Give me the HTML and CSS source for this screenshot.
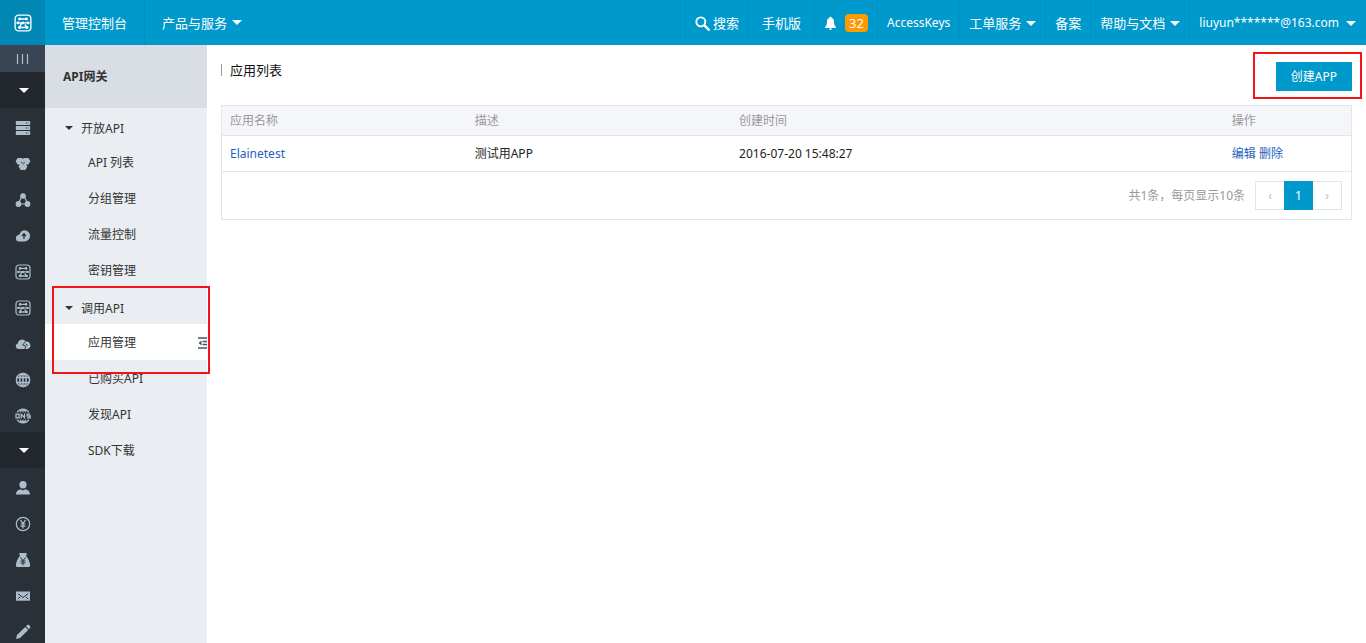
FILE: index.html
```html
<!DOCTYPE html>
<html lang="zh-CN">
<head>
<meta charset="utf-8">
<title>API网关 - 管理控制台</title>
<link rel="stylesheet" href="styles.css">
</head>
<body>
<svg class="defs" aria-hidden="true">
  <symbol id="cloud-box" viewBox="0 0 16 16">
    <rect x="1" y="1" width="14" height="14" rx="3" fill="none" stroke="currentColor" stroke-width="1.200"/>
    <path d="M4.600 4.400h6.800M2.800 7.900h10.400M6.800 8.300L4.800 12h6.200M10 9.800l1.800 2.400" fill="none" stroke="currentColor" stroke-width="1.300" stroke-linecap="round"/>
    <g fill="currentColor"><circle cx="5" cy="4.400" r="1.300"/><circle cx="11" cy="4.400" r="1.300"/><circle cx="3.500" cy="7.900" r="1.200"/><circle cx="12.500" cy="7.900" r="1.200"/><circle cx="8" cy="7.900" r="1.200"/><circle cx="5" cy="12" r="1.300"/><circle cx="11.600" cy="12" r="1.300"/></g>
  </symbol>
</svg>
<header class="topbar">
  <a class="logo" href="#" aria-label="首页"><svg class="logo-icon"><use href="#cloud-box"/></svg></a>
  <nav class="topnav">
    <a class="nav-main nav-home" href="#">管理控制台</a>
    <button class="nav-main" type="button">产品与服务<span class="caret"></span></button>
  </nav>
  <nav class="tools">
    <a class="tool" href="#"><svg class="search-icon" viewBox="0 0 16 16"><circle cx="6.200" cy="6.200" r="4.800" fill="none" stroke="currentColor" stroke-width="2"/><path d="M10 10l4.600 4.600" stroke="currentColor" stroke-width="2.600" stroke-linecap="round"/></svg>搜索</a>
    <a class="tool tool-wide" href="#">手机版</a>
    <a class="tool tool-bell" href="#" aria-label="消息"><svg class="bell-icon" viewBox="0 0 14 16"><path d="M7 .8c.9 0 1.300.6 1.300 1.300 1.700.6 2.500 2 2.500 3.800 0 3.400.6 4.700 2.200 6.100v.8H1V12c1.600-1.400 2.200-2.700 2.200-6.100 0-1.800.8-3.200 2.500-3.800C5.700 1.400 6.100.8 7 .8zM5.400 13.500h3.200c0 1-.7 1.600-1.600 1.600s-1.600-.6-1.600-1.600z" fill="currentColor"/></svg><span class="badge">32</span></a>
    <a class="tool tool-latin" href="#">AccessKeys</a>
    <button class="tool" type="button">工单服务<span class="caret"></span></button>
    <a class="tool" href="#">备案</a>
    <button class="tool" type="button">帮助与文档<span class="caret"></span></button>
    <button class="tool tool-latin" type="button">liuyun*******@163.com<span class="caret"></span></button>
  </nav>
</header>
<div class="shell">
  <nav class="rail" aria-label="产品">
    <button class="rail-toggle" type="button" aria-label="收起"><svg viewBox="0 0 16 16"><path d="M2.500 3v10M7.500 3v10M12.500 3v10" stroke="currentColor" stroke-width="1.200"/></svg></button>
    <button class="rail-fold" type="button" aria-label="产品与服务"><span class="caret"></span></button>
    <a class="rail-item" href="#" aria-label="服务器"><svg viewBox="0 0 16 16"><path d="M1.500 1h13a.7.7 0 0 1 .7.7v2.600a.7.7 0 0 1-.7.7h-13a.7.7 0 0 1-.7-.7V1.700a.7.7 0 0 1 .7-.7zM1.500 6h13a.7.7 0 0 1 .7.7v2.600a.7.7 0 0 1-.7.7h-13a.7.7 0 0 1-.7-.7V6.700a.7.7 0 0 1 .7-.7zM1.500 11h13a.7.7 0 0 1 .7.7v2.600a.7.7 0 0 1-.7.700h-13a.7.7 0 0 1-.7-.7v-2.600a.7.7 0 0 1 .7-.7z" fill="currentColor"/><path d="M11 3h2.500M11 8h2.500M11 13h2.500" stroke="#293038" stroke-width="1.200" stroke-dasharray="1.200 .8"/></svg></a>
    <a class="rail-item" href="#" aria-label="数据库"><svg viewBox="0 0 16 16"><g fill="currentColor"><path d="M2.600 2h4l1.400.8L9.400 2h4l2 3.200-2 3.400H2.600l-2-3.400z"/><path d="M5.600 7h4.800l2 3.400-2 3.600H5.600l-2-3.600z"/></g><path d="M6.200 6.600h1.200M8.600 6.600h1.200M8 7.400v1.200" stroke="#293038" stroke-width=".9"/></svg></a>
    <a class="rail-item" href="#" aria-label="负载均衡"><svg viewBox="0 0 16 16"><g fill="currentColor"><circle cx="8" cy="4" r="2.800"/><circle cx="3.500" cy="12" r="2.900"/><circle cx="12.500" cy="12" r="2.900"/></g><path d="M6.500 5L3.500 11M9.500 5l3 6M4 12h8" stroke="currentColor" stroke-width="1.200"/></svg></a>
    <a class="rail-item" href="#" aria-label="对象存储"><svg viewBox="0 0 16 16"><path d="M3.600 13.500A3.300 3.300 0 0 1 2.800 7.200 C4 6.600 4.800 6.700 5.200 5 6 3.200 7.600 2.300 9.500 2.300a5.600 5.600 0 0 1 0 11.200z" fill="currentColor"/><path d="M9 6v5M7 8l2-2.200L11 8" fill="none" stroke="#293038" stroke-width="1.300"/></svg></a>
    <a class="rail-item" href="#" aria-label="云产品一"><svg><use href="#cloud-box"/></svg></a>
    <a class="rail-item" href="#" aria-label="云产品二"><svg><use href="#cloud-box"/></svg></a>
    <a class="rail-item" href="#" aria-label="云监控"><svg viewBox="0 0 16 16"><path d="M3.500 13A2.800 2.800 0 0 1 2.800 7.500 4.200 4.200 0 0 1 10.600 5.600 3.800 3.800 0 0 1 12.400 13z" fill="currentColor"/><path d="M10.400 5.800L7.600 9l3.400 1.200-1.200 2.800M11 8.200l1.800 1.200" fill="none" stroke="#293038" stroke-width=".9"/></svg></a>
    <a class="rail-item" href="#" aria-label="网络"><svg viewBox="0 0 16 16"><g fill="none" stroke="currentColor" stroke-width="1.500"><circle cx="8" cy="8" r="6.600"/><ellipse cx="8" cy="8" rx="3.200" ry="6.600"/><path d="M8 1v14M1.500 5.500h13M1.500 10.500h13"/></g></svg></a>
    <a class="rail-item" href="#" aria-label="域名"><svg viewBox="0 0 16 16"><g fill="none" stroke="currentColor" stroke-width="1.300"><path d="M2.200 4.400a6.800 6.800 0 0 1 11.600 0M2.200 11.600a6.800 6.800 0 0 0 11.600 0M8 1v3.200M8 11.800V15M5.200 4.200C5.800 2.600 6.800 1.600 8 1.300c1.200.3 2.200 1.300 2.800 2.900M5.200 11.800c.6 1.600 1.600 2.600 2.800 2.900 1.200-.3 2.200-1.300 2.800-2.900"/><path d="M1 6.200h3v3.600H1zM6.200 10.400V6.400l3.300 3.200V5.600M15.200 6.200h-3V8h3v1.800h-3.200"/></g></svg></a>
    <button class="rail-fold" type="button" aria-label="用户中心"><span class="caret"></span></button>
    <a class="rail-item" href="#" aria-label="账号"><svg viewBox="0 0 16 16"><path d="M8 1c2.300 0 3.600 1.400 3.600 3.600C11.600 7 10.500 8.600 8 8.600S4.400 7 4.400 4.600C4.400 2.400 5.700 1 8 1zM1 14.500c0-3 1.500-4.500 4.700-5.300L8 10.400l2.300-1.200c3.200.8 4.700 2.300 4.700 5.300z" fill="currentColor"/></svg></a>
    <a class="rail-item" href="#" aria-label="费用"><svg viewBox="0 0 16 16"><g fill="none" stroke="currentColor" stroke-width="1.200"><circle cx="8" cy="8" r="6.700"/><path d="M5.400 3.800L8 7.600l2.600-3.800M8 7.600v5M5.500 8h5M5.500 10.200h5"/></g></svg></a>
    <a class="rail-item" href="#" aria-label="续费"><svg viewBox="0 0 16 16"><path d="M4.200 1h7.600l-.6 3.200c2.400 2.400 3.600 5.600 4 9.400 0 .8-.5 1.400-1.400 1.400H2.200C1.300 15 .8 14.400.8 13.600c.4-3.800 1.600-7 4-9.400z" fill="currentColor"/><path d="M5.500 5.500L8 8.700l2.500-3.200M8 8.700v4.500M5.500 9h5M5.500 11h5" fill="none" stroke="#293038" stroke-width="1"/></svg></a>
    <a class="rail-item" href="#" aria-label="消息中心"><svg viewBox="0 0 16 16"><path d="M1 3.500h14v9.200H1z" fill="currentColor"/><path d="M2.800 5.500L8 9.600l5.200-4.100M2.800 11l2.200-2M13.200 11L11 9" fill="none" stroke="#293038" stroke-width="1"/></svg></a>
    <a class="rail-item" href="#" aria-label="备案"><svg viewBox="0 0 16 16"><path d="M1 15l1-4L10.200 3l3 3L5 14zM11 2.200l1.200-1.100c.6-.5 1.200-.5 1.800 0l1 1c.5.600.5 1.200 0 1.800L14 5.200z" fill="currentColor"/></svg></a>
  </nav>
  <aside class="side">
    <h1 class="side-title">API网关</h1>
    <section class="group">
      <button class="group-head" type="button"><span class="caret"></span>开放API</button>
      <a class="side-link" href="#">API 列表</a>
      <a class="side-link" href="#">分组管理</a>
      <a class="side-link" href="#">流量控制</a>
      <a class="side-link" href="#">密钥管理</a>
    </section>
    <section class="group">
      <button class="group-head" type="button"><span class="caret"></span>调用API</button>
      <a class="side-link is-active" href="#">应用管理<svg class="collapse-icon" viewBox="0 0 9 12"><path d="M0 1h9M4.500 4.500H9M4.500 7.500H9M0 11h9" stroke="#465464" stroke-width="1.600"/><path d="M3.500 3.500v5L.5 6z" fill="#465464"/></svg></a>
      <a class="side-link" href="#">已购买API</a>
      <a class="side-link" href="#">发现API</a>
      <a class="side-link" href="#">SDK下载</a>
      <span class="mark mark-side"></span>
    </section>
  </aside>
  <main class="content">
    <div class="page-head">
      <h2 class="page-title">应用列表</h2>
      <div class="create"><button class="create-btn" type="button">创建APP</button><span class="mark mark-create"></span></div>
    </div>
    <table class="apps">
      <colgroup><col class="col-name"><col class="col-desc"><col class="col-time"><col></colgroup>
      <thead><tr><th>应用名称</th><th>描述</th><th>创建时间</th><th>操作</th></tr></thead>
      <tbody><tr><td><a href="#">Elainetest</a></td><td>测试用APP</td><td>2016-07-20 15:48:27</td><td><a href="#">编辑</a> <a href="#">删除</a></td></tr></tbody>
    </table>
    <div class="pager">
      <span class="total">共1条，每页显示10条</span>
      <div class="pages"><button type="button" aria-label="上一页">‹</button><button class="current" type="button">1</button><button type="button" aria-label="下一页">›</button></div>
    </div>
  </main>
</div>
</body>
</html>
```
FILE: styles.css
```css
* { box-sizing: border-box; }
body {
  margin: 0;
  height: 100vh;
  overflow: hidden;
  display: flex;
  flex-direction: column;
  background: #fff;
  color: #222;
  font: 12px/18px "Noto Sans", "Noto Sans CJK SC", sans-serif;
}
a { color: #1f5fc0; text-decoration: none; }
button { margin: 0; padding: 0; border: 0; background: none; color: inherit; font: inherit; cursor: pointer; }
.defs { display: none; }
.caret { border: 5px solid transparent; border-top-color: currentColor; border-bottom: 0; }

.topbar { flex: none; display: flex; height: 45px; background: #09c; color: #fff; font-size: 13px; }
.logo { display: flex; align-items: center; justify-content: center; width: 45px; background: #0087b4; color: #fff; }
.logo-icon { width: 18px; height: 18px; }
.topnav, .tools { display: flex; }
.tools { margin-left: auto; }
.nav-main, .tool { display: flex; align-items: center; gap: 5px; color: #fff; white-space: nowrap; }
.nav-main { padding: 0 17px; }
.nav-home { border-right: 1px solid #008fbf; }
.tool { padding: 1px 9px 0; border-left: 1px solid #0092c4; }
.tool-latin { font-size: 12px; }
.tool:last-child { gap: 7px; padding-right: 10px; }
.tool-wide { padding: 1px 13px 0; }
.search-icon { width: 15px; height: 15px; margin-right: -2px; }
.tool-bell { gap: 8px; }
.bell-icon { width: 13px; height: 15px; }
.badge { padding: 0 4px; border-radius: 4px; background: #f90; }

.shell { flex: 1; display: flex; min-height: 0; }
.rail { flex: none; display: flex; flex-direction: column; width: 45px; overflow: hidden; background: #293038; color: #aebdca; }
.rail svg { width: 16px; height: 16px; }
.rail-toggle, .rail-fold, .rail-item { flex: none; display: flex; align-items: center; justify-content: center; height: 36px; padding-left: 1px; color: inherit; }
.rail-item { padding-top: 4px; }
.rail-toggle { height: 27px; background: #394555; }
.rail-fold { padding-left: 2px; background: #22282e; color: #fff; }

.side { flex: none; width: 162px; background: #eaedf1; color: #333; }
.side-title { margin: 0; padding: 23px 18px 22px; background: #d9dee4; font-size: 12px; line-height: 18px; font-weight: 700; }
.group { position: relative; }
.group-head { display: flex; align-items: center; gap: 8px; width: 100%; height: 36px; padding: 6px 20px 0; }
.group-head .caret { border-width: 4px 4px 0; margin-bottom: 3px; }
.side-link { display: flex; align-items: center; justify-content: space-between; height: 36px; padding: 2px 0 0 43px; color: #333; }
.side-link.is-active { background: #fff; }
.collapse-icon { width: 9px; height: 12px; }

.mark { position: absolute; border: 2px solid #f01414; pointer-events: none; }
.mark-side { top: -2px; left: 7px; right: -3px; height: 88px; }
.mark-create { inset: -10px -10px -8px -23px; }

.content { flex: 1; min-width: 0; padding: 17px 14px; }
.page-head { display: flex; justify-content: space-between; align-items: flex-start; margin-bottom: 14px; }
.page-title { margin: 2px 0 0; padding-left: 8px; border-left: 1px solid #8899aa; font-size: 13px; line-height: 12px; font-weight: 400; color: #111; }
.create { position: relative; }
.create-btn { height: 29px; padding: 0 15px; background: #09c; color: #fff; }
.apps { width: 100%; table-layout: fixed; border-collapse: collapse; border: 1px solid #e1e6eb; }
.apps th, .apps td { padding: 0 8px; text-align: left; font-weight: 400; border-bottom: 1px solid #e1e6eb; }
.apps th { height: 30px; background: #f5f6fa; color: #999; }
.apps td { height: 36px; }
.col-name { width: 21.7%; }
.col-desc { width: 23.4%; }
.col-time { width: 43.6%; }
.pager { display: flex; justify-content: flex-end; align-items: center; gap: 10px; padding: 9px; border: 1px solid #e1e6eb; border-top: 0; color: #999; }
.pages { display: flex; border: 1px solid #e1e6eb; }
.pages button { width: 28px; height: 27px; color: #bbb; }
.pages .current { width: 29px; height: 29px; margin: -1px 0; background: #09c; color: #fff; }
```
